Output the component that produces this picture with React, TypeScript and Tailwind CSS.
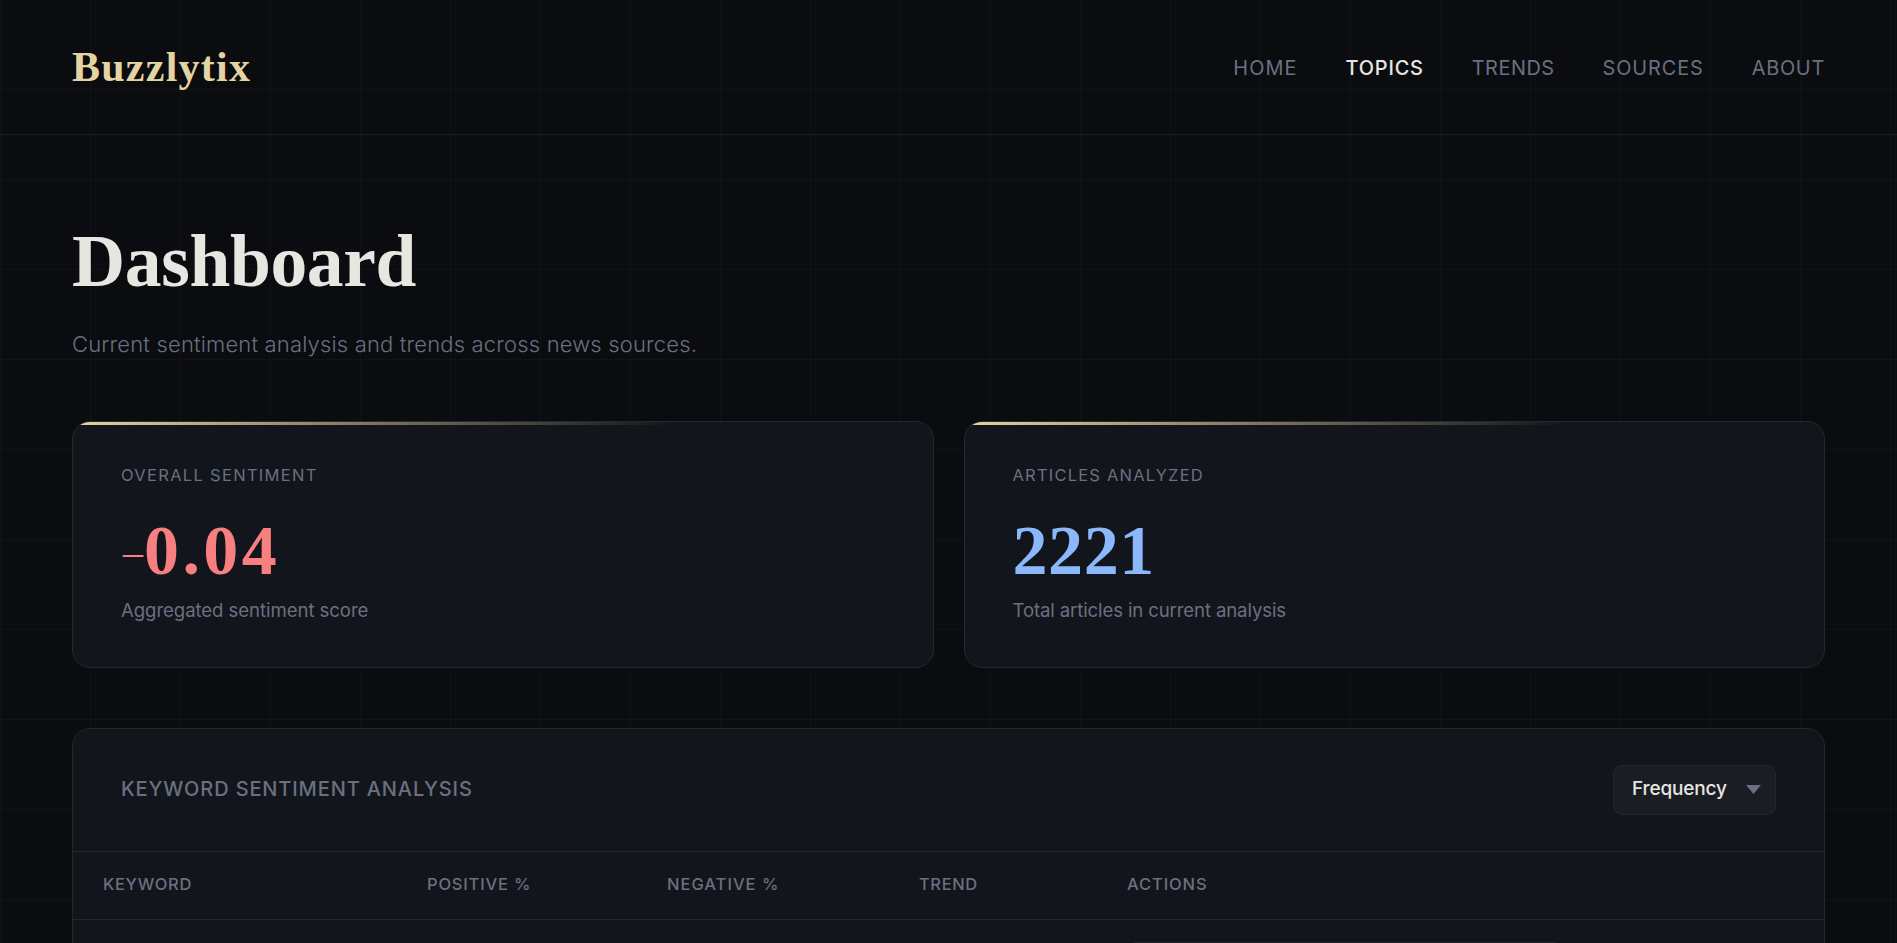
import { useState } from "react";
import clsx from "clsx";

type StatCard = {
  id: string;
  label: string;
  description: string;
  labelClass: string;
  descriptionClass: string;
};

const navLinks = [
  { label: "Home", className: "tracking-[1.1px]" },
  { label: "Topics", className: "tracking-[0.82px]" },
  { label: "Trends", className: "tracking-[0.51px]" },
  { label: "Sources", className: "tracking-[0.9px]" },
  { label: "About", className: "tracking-[0.75px]" },
];

const stats: StatCard[] = [
  {
    id: "sentiment",
    label: "Overall Sentiment",
    description: "Aggregated sentiment score",
    labelClass: "tracking-[1.3px]",
    descriptionClass: "tracking-[-0.07px]",
  },
  {
    id: "articles",
    label: "Articles Analyzed",
    description: "Total articles in current analysis",
    labelClass: "tracking-[1.2px]",
    descriptionClass: "tracking-[-0.13px]",
  },
];

const columns = [
  { label: "Keyword", width: "w-[324px]", className: "tracking-[0.65px]" },
  { label: "Positive %", width: "w-[240px]", className: "tracking-[0.8px]" },
  { label: "Negative %", width: "w-[252px]", className: "tracking-[1px]" },
  { label: "Trend", width: "w-[208px]", className: "tracking-[0.6px]" },
  { label: "Actions", width: "", className: "tracking-[0.9px]" },
];

function Header({ active }: { active: string }) {
  return (
    <header className="flex h-[135px] items-center justify-between border-b border-[#1c1d21] px-[72px]">
      <a
        href="#"
        className="font-['Liberation_Serif',serif] text-[42px] leading-[50px] font-bold tracking-[1.25px] text-[#e4d4a2]"
      >
        Buzzlytix
      </a>
      <nav className="flex gap-12 pt-0.5 text-[19.9px] leading-6 uppercase">
        {navLinks.map((link) => (
          <a
            key={link.label}
            href="#"
            className={clsx(
              link.className,
              link.label === active
                ? "font-medium text-[#e8e6e1]"
                : "text-[#6b7080]"
            )}
          >
            {link.label}
          </a>
        ))}
      </nav>
    </header>
  );
}

function StatValue({ id }: { id: string }) {
  if (id === "sentiment") {
    return (
      <div className="font-['Liberation_Serif',serif] text-[70px] leading-[70px] font-bold tracking-[3.4px] text-[#f87f7f]">
        {/* Hairline minus sign */}
        <span className="relative -top-[9px] mr-px ml-0.5 text-[40px] leading-none font-normal tracking-[0px]">
          –
        </span>
        0.04
      </div>
    );
  }

  return (
    <div className="font-['Liberation_Serif',serif] text-[70px] leading-[70px] font-bold tracking-[0.6px] text-[#8bb8fb]">
      2221
    </div>
  );
}

function Stat({ stat }: { stat: StatCard }) {
  return (
    <div className="relative h-[247px] overflow-hidden rounded-[18px] border border-[#26272b] bg-[#12151c] px-12 pt-[41px]">
      {/* Accent line */}
      <div className="absolute inset-x-0 top-0 h-[3px] bg-linear-to-r from-[#e4d4a2] to-transparent to-70%" />
      <p
        className={clsx(
          "text-[16.5px] leading-6 text-[#6b7080] uppercase",
          stat.labelClass
        )}
      >
        {stat.label}
      </p>
      <div className="mt-[29px]">
        <StatValue id={stat.id} />
      </div>
      <p
        className={clsx(
          "mt-2.5 text-[18.6px] leading-7 text-[#6b7080]",
          stat.descriptionClass
        )}
      >
        {stat.description}
      </p>
    </div>
  );
}

function SortSelect() {
  const [sort, setSort] = useState("frequency");

  return (
    <div className="relative">
      <select
        value={sort}
        onChange={(e) => setSort(e.target.value)}
        className="block h-[50px] w-[163px] appearance-none rounded-[9px] border border-[#26272b] bg-[#1a1d24] pb-px pl-[18px] text-[19px] font-medium tracking-[-0.15px] text-[#e8e6e1]"
      >
        <option value="frequency">Frequency</option>
        <option value="positive">Positive</option>
        <option value="negative">Negative</option>
      </select>
      <svg
        className="pointer-events-none absolute top-5 right-[15px] h-[9px] w-[15px] fill-[#6b7080]"
        viewBox="0 0 15 9"
      >
        <path d="M0 0h15L7.5 9z" />
      </svg>
    </div>
  );
}

function KeywordTable() {
  return (
    <section className="mt-[60px] h-[400px] overflow-hidden rounded-[18px] border border-[#26272b] bg-[#12151c]">
      <div className="flex h-[123px] items-center justify-between border-b border-[#26272b] px-12">
        <h2 className="pb-0.5 text-[20px] leading-7 font-medium tracking-[0.87px] text-[#6b7080] uppercase">
          Keyword Sentiment Analysis
        </h2>
        <SortSelect />
      </div>
      <table className="w-full table-fixed border-collapse">
        <thead>
          <tr className="h-[67px] border-b border-[#26272b]">
            {columns.map((column) => (
              <th
                key={column.label}
                className={clsx(
                  "px-[30px] pb-[3px] text-left align-middle text-[16.5px] leading-6 font-medium whitespace-nowrap text-[#6b7080] uppercase",
                  column.width,
                  column.className
                )}
              >
                {column.label}
              </th>
            ))}
          </tr>
        </thead>
        <tbody>
          <tr>
            <td colSpan={4} />
            <td className="px-[31px] pt-[22px]">
              <div className="h-[54px] w-[434px] rounded-[9px] border border-[#26272b] bg-[#1a1d24]" />
            </td>
          </tr>
        </tbody>
      </table>
    </section>
  );
}

export default function App() {
  return (
    <div className="h-[943px] overflow-hidden bg-[#0a0c10] bg-[linear-gradient(rgba(255,255,255,0.025)_1px,transparent_1px),linear-gradient(90deg,rgba(255,255,255,0.025)_1px,transparent_1px)] bg-[size:90px_90px] bg-[position:0_-1px] font-['Inter',sans-serif]">
      <Header active="Topics" />
      <main className="px-[72px] pt-[87px]">
        <h1 className="font-['Liberation_Serif',serif] text-[73.5px] leading-[80px] font-bold tracking-[-0.35px] text-[#e8e6e1]">
          Dashboard
        </h1>
        <p className="mt-6 text-[22px] leading-9 font-light tracking-[0.17px] text-[#6b7080]">
          Current sentiment analysis and trends across news sources.
        </p>
        <div className="mt-[59px] grid grid-cols-2 gap-[30px]">
          {stats.map((stat) => (
            <Stat key={stat.id} stat={stat} />
          ))}
        </div>
        <KeywordTable />
      </main>
    </div>
  );
}
